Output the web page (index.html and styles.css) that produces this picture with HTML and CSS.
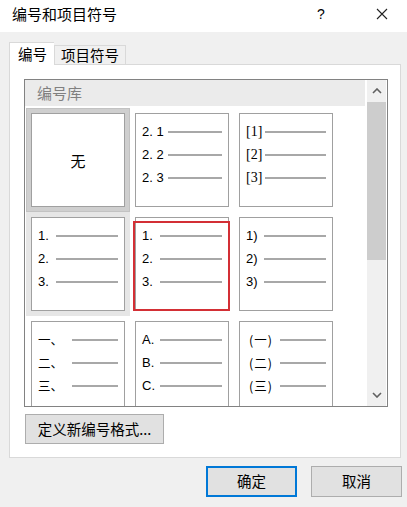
FILE: index.html
```html
<!DOCTYPE html>
<html lang="zh-CN">
<head>
<meta charset="utf-8">
<title>编号和项目符号</title>
<link rel="stylesheet" href="styles.css">
</head>
<body>
<div class="dialog">
  <div class="titlebar">
    <span class="title">编号和项目符号</span>
    <span class="help">?</span>
    <span class="close">
      <svg width="12" height="12" viewBox="0 0 12 12"><path d="M1 1 L11 11 M11 1 L1 11" stroke="#222" stroke-width="1.1" fill="none"/></svg>
    </span>
  </div>
  <div class="body">
    <div class="tabs">
      <div class="tab active">编号</div>
      <div class="tab">项目符号</div>
    </div>
    <div class="panel">
      <div class="listbox">
        <div class="listcontent">
          <div class="listhead">编号库</div>
          <div class="grid">
            <div class="slot selected"><div class="cell none">无</div></div>
            <div class="slot"><div class="cell">
              <div class="row"><span class="lab w26">2. 1</span><span class="ln"></span></div>
              <div class="row"><span class="lab w26">2. 2</span><span class="ln"></span></div>
              <div class="row"><span class="lab w26">2. 3</span><span class="ln"></span></div>
            </div></div>
            <div class="slot"><div class="cell">
              <div class="row"><span class="lab serif w19">[1]</span><span class="ln"></span></div>
              <div class="row"><span class="lab serif w19">[2]</span><span class="ln"></span></div>
              <div class="row"><span class="lab serif w19">[3]</span><span class="ln"></span></div>
            </div></div>

            <div class="slot hover"><div class="cell">
              <div class="row"><span class="lab w18">1.</span><span class="ln"></span></div>
              <div class="row"><span class="lab w18">2.</span><span class="ln"></span></div>
              <div class="row"><span class="lab w18">3.</span><span class="ln"></span></div>
            </div></div>
            <div class="slot"><div class="cell">
              <div class="row"><span class="lab w18">1.</span><span class="ln"></span></div>
              <div class="row"><span class="lab w18">2.</span><span class="ln"></span></div>
              <div class="row"><span class="lab w18">3.</span><span class="ln"></span></div>
            </div><div class="mark"></div></div>
            <div class="slot"><div class="cell">
              <div class="row"><span class="lab w18">1)</span><span class="ln"></span></div>
              <div class="row"><span class="lab w18">2)</span><span class="ln"></span></div>
              <div class="row"><span class="lab w18">3)</span><span class="ln"></span></div>
            </div></div>

            <div class="slot"><div class="cell">
              <div class="row"><span class="lab cjk w34">一、</span><span class="ln"></span></div>
              <div class="row"><span class="lab cjk w34">二、</span><span class="ln"></span></div>
              <div class="row"><span class="lab cjk w34">三、</span><span class="ln"></span></div>
            </div></div>
            <div class="slot"><div class="cell">
              <div class="row"><span class="lab w18">A.</span><span class="ln"></span></div>
              <div class="row"><span class="lab w18">B.</span><span class="ln"></span></div>
              <div class="row"><span class="lab w18">C.</span><span class="ln"></span></div>
            </div></div>
            <div class="slot"><div class="cell">
              <div class="row"><span class="lab cjk paren w34">(一)</span><span class="ln"></span></div>
              <div class="row"><span class="lab cjk paren w34">(二)</span><span class="ln"></span></div>
              <div class="row"><span class="lab cjk paren w34">(三)</span><span class="ln"></span></div>
            </div></div>
          </div>
        </div>
        <div class="scrollbar">
          <div class="arrow">
            <svg width="10" height="6" viewBox="0 0 10 6"><path d="M1 5 L5 1 L9 5" stroke="#606060" stroke-width="1.6" fill="none"/></svg>
          </div>
          <div class="thumb"></div>
          <div class="track"></div>
          <div class="arrow">
            <svg width="10" height="6" viewBox="0 0 10 6"><path d="M1 1 L5 5 L9 1" stroke="#606060" stroke-width="1.6" fill="none"/></svg>
          </div>
        </div>
      </div>
      <button class="btn define">定义新编号格式...</button>
    </div>
    <div class="footer">
      <button class="btn default">确定</button>
      <button class="btn">取消</button>
    </div>
  </div>
</div>
</body>
</html>
```

FILE: styles.css
```css
* { box-sizing: border-box; }
html, body { margin: 0; padding: 0; }
body {
  width: 407px;
  height: 507px;
  overflow: hidden;
  background: #f0f0f0;
  font-family: "Noto Sans CJK SC", "Liberation Sans", sans-serif;
  color: #000;
}
.dialog { width: 407px; height: 507px; display: flex; flex-direction: column; }
.titlebar {
  height: 32px;
  background: #fff;
  display: flex;
  align-items: flex-start;
  line-height: 28px;
}
.title { font-size: 15px; padding-left: 12px; flex: 1; }
.help { font-size: 14px; width: 12px; margin-right: 47px; font-family: "Liberation Sans", sans-serif; }
.close { width: 12px; margin-right: 19px; display: flex; align-items: center; height: 28px; }

.body { flex: 1; padding: 10px 0 0 9px; }
.tabs { display: flex; align-items: flex-end; height: 22px; }
.tab {
  font-size: 14.5px;
  height: 19px;
  line-height: 18px;
  padding: 0 5px;
  border: 1px solid #d9d9d9;
  border-bottom: none;
  background: #f0f0f0;
  width: 72px;
  text-align: center;
}
.tab.active {
  height: 23px;
  width: 45px;
  line-height: 22px;
  background: #fff;
  border-right: none;
  margin-bottom: -1px;
  position: relative;
  z-index: 2;
  padding: 0 0 0 1px;
}
.panel {
  width: 392px;
  height: 394px;
  background: #fff;
  border: 1px solid #d9d9d9;
  padding: 14px 0 0 14px;
  position: relative;
  z-index: 1;
}
.listbox {
  width: 364px;
  height: 328px;
  border: 1px solid #828282;
  display: flex;
  overflow: hidden;
}
.listcontent { flex: 1; overflow: hidden; }
.listhead {
  height: 26px;
  margin-right: 2px;
  background: #ebebeb;
  color: #808080;
  font-size: 15px;
  line-height: 26px;
  padding-left: 12px;
}
.grid {
  display: grid;
  grid-template-columns: repeat(3, 104px);
  grid-auto-rows: 104px;
  margin-top: 2px;
  padding-left: 1px;
}
.slot { padding: 5px; position: relative; }
.slot.selected { background: #cfcfcf; box-shadow: inset 0 0 0 1px #c2c2c2; }
.slot.hover { background: #e6e6e6; }
.cell {
  width: 94px;
  height: 94px;
  border: 1px solid #a0a0a0;
  background: #fff;
  padding: 6px 6px 0 6px;
}
.cell.none {
  display: flex;
  align-items: center;
  justify-content: center;
  font-size: 15px;
  padding: 0;
}
.row { height: 23px; display: flex; align-items: center; }
.lab {
  font-family: "Liberation Sans", sans-serif;
  font-size: 13px;
  white-space: nowrap;
  flex: none;
}
.lab.serif { font-family: "Liberation Serif", serif; font-size: 14px; }
.lab.cjk { font-family: "Noto Sans CJK SC", sans-serif; font-size: 12.5px; }
.lab.paren { padding-left: 3px; letter-spacing: 1px; }
.w18 { width: 18px; }
.w19 { width: 19px; }
.w26 { width: 26px; }
.w34 { width: 34px; }
.ln { flex: 1; height: 2px; background: #a8a8a8; }
.mark {
  position: absolute;
  left: 3px;
  top: 9px;
  width: 97px;
  height: 90px;
  border: 2px solid #d32f35;
}
.scrollbar {
  width: 19px;
  margin-right: 1px;
  background: #f0f0f0;
  display: flex;
  flex-direction: column;
}
.arrow { height: 22px; display: flex; align-items: center; justify-content: center; }
.thumb { height: 158px; background: #cdcdcd; }
.track { flex: 1; }

.btn {
  font-family: "Noto Sans CJK SC", sans-serif;
  font-size: 14.5px;
  background: #e1e1e1;
  border: 1px solid #adadad;
  color: #000;
  padding: 0;
  line-height: 1;
}
.define { display: block; width: 139px; height: 30px; margin: 7px 0 0 1px; }
.footer { display: flex; justify-content: flex-end; gap: 14px; padding: 8px 5px 0 0; }
.footer .btn { width: 91px; height: 31px; }
.btn.default { border: 2px solid #0078d7; }
```
